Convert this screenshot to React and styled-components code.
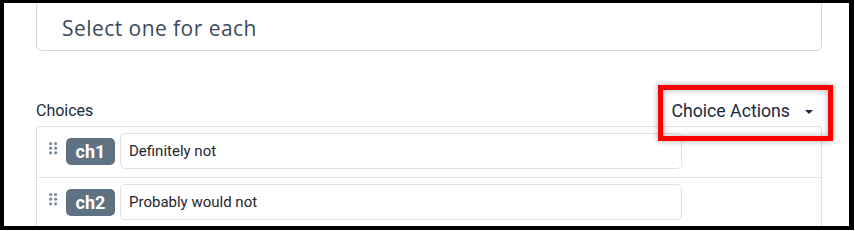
import React from 'react'
import styled, { createGlobalStyle } from 'styled-components'

const GlobalStyle = createGlobalStyle`
  html, body {
    margin: 0;
    padding: 0;
    background: #ffffff;
  }
  * {
    box-sizing: border-box;
  }
`

const choices = [
  { id: 'ch1', text: 'Definitely not' },
  { id: 'ch2', text: 'Probably would not' },
]

function DragHandle() {
  const dots = []
  for (let r = 0; r < 3; r++) {
    for (let c = 0; c < 2; c++) {
      dots.push(<circle key={r + '-' + c} cx={1.6 + c * 5} cy={1.6 + r * 4.6} r="1.6" />)
    }
  }
  return (
    <Handle width="9" height="13" viewBox="0 0 9 13">
      {dots}
    </Handle>
  )
}

function App() {
  return (
    <>
      <GlobalStyle />
      <Frame>
        <Content>
          <PromptBox>Select one for each</PromptBox>
          <Header>
            <Label>Choices</Label>
            <ActionsWrap>
              <ActionsButton>
                Choice Actions
                <Caret />
              </ActionsButton>
              <Highlight />
            </ActionsWrap>
          </Header>
          <List>
            {choices.map((c) => (
              <Row key={c.id}>
                <DragHandle />
                <Badge>{c.id}</Badge>
                <ChoiceInput>{c.text}</ChoiceInput>
              </Row>
            ))}
          </List>
        </Content>
      </Frame>
    </>
  )
}

export default App

const Frame = styled.div`
  width: 854px;
  height: 230px;
  border-style: solid;
  border-color: #000;
  border-width: 3px 5px 4px 4px;
  overflow: hidden;
  background: #fff;
`

const Content = styled.div`
  padding: 0 27px 0 32px;
`

const PromptBox = styled.div`
  margin-top: -13px;
  height: 61px;
  border: 1px solid #d3d9df;
  border-radius: 6px;
  padding: 23px 0 0 25px;
  font-family: "Open Sans", "Noto Sans", sans-serif;
  font-size: 21px;
  line-height: 28px;
  letter-spacing: 0.45px;
  color: #3b4a5c;
`

const Header = styled.div`
  margin-top: 50px;
  padding-bottom: 5px;
  display: flex;
  justify-content: space-between;
  align-items: flex-end;
  font-family: Roboto, "Liberation Sans", sans-serif;
`

const Label = styled.div`
  font-size: 16px;
  line-height: 20px;
  color: #1c2b3c;
`

const ActionsWrap = styled.div`
  position: relative;
`

const ActionsButton = styled.div`
  display: flex;
  align-items: center;
  padding-right: 9px;
  font-size: 17.7px;
  line-height: 20px;
  color: #1b2940;
`

const Caret = styled.span`
  margin-left: 15px;
  margin-top: 2px;
  width: 0;
  height: 0;
  border-left: 4.5px solid transparent;
  border-right: 4.5px solid transparent;
  border-top: 4.5px solid #1b2940;
`

const Highlight = styled.div`
  position: absolute;
  top: -16px;
  left: -13px;
  right: -11px;
  bottom: -20px;
  border: 5px solid #ff0000;
  box-shadow: 0 0 6px rgba(0, 0, 0, 0.35), inset 0 0 6px rgba(0, 0, 0, 0.3);
  z-index: 2;
  pointer-events: none;
`

const List = styled.div`
  border: 1px solid #dee2e6;
  border-bottom: none;
  border-radius: 4px 4px 0 0;
`

const Row = styled.div`
  display: flex;
  align-items: center;
  padding: 6px 0 8px 12px;
  border-bottom: 1px solid #dee2e6;
`

const Handle = styled.svg`
  fill: #7a8fa1;
  flex-shrink: 0;
  margin-bottom: 6px;
`

const Badge = styled.span`
  margin-left: 8px;
  width: 49px;
  height: 27px;
  border-radius: 5px;
  background: #5f7283;
  color: #fff;
  display: flex;
  align-items: center;
  justify-content: center;
  font-family: Roboto, "Liberation Sans", sans-serif;
  font-weight: 700;
  font-size: 18px;
`

const ChoiceInput = styled.div`
  margin-left: 5px;
  width: 562px;
  height: 36px;
  border: 1px solid #dee2e6;
  border-radius: 5px;
  padding: 0 8px;
  display: flex;
  align-items: center;
  font-family: Roboto, "Liberation Sans", sans-serif;
  font-size: 15px;
  color: #1e2630;
`
